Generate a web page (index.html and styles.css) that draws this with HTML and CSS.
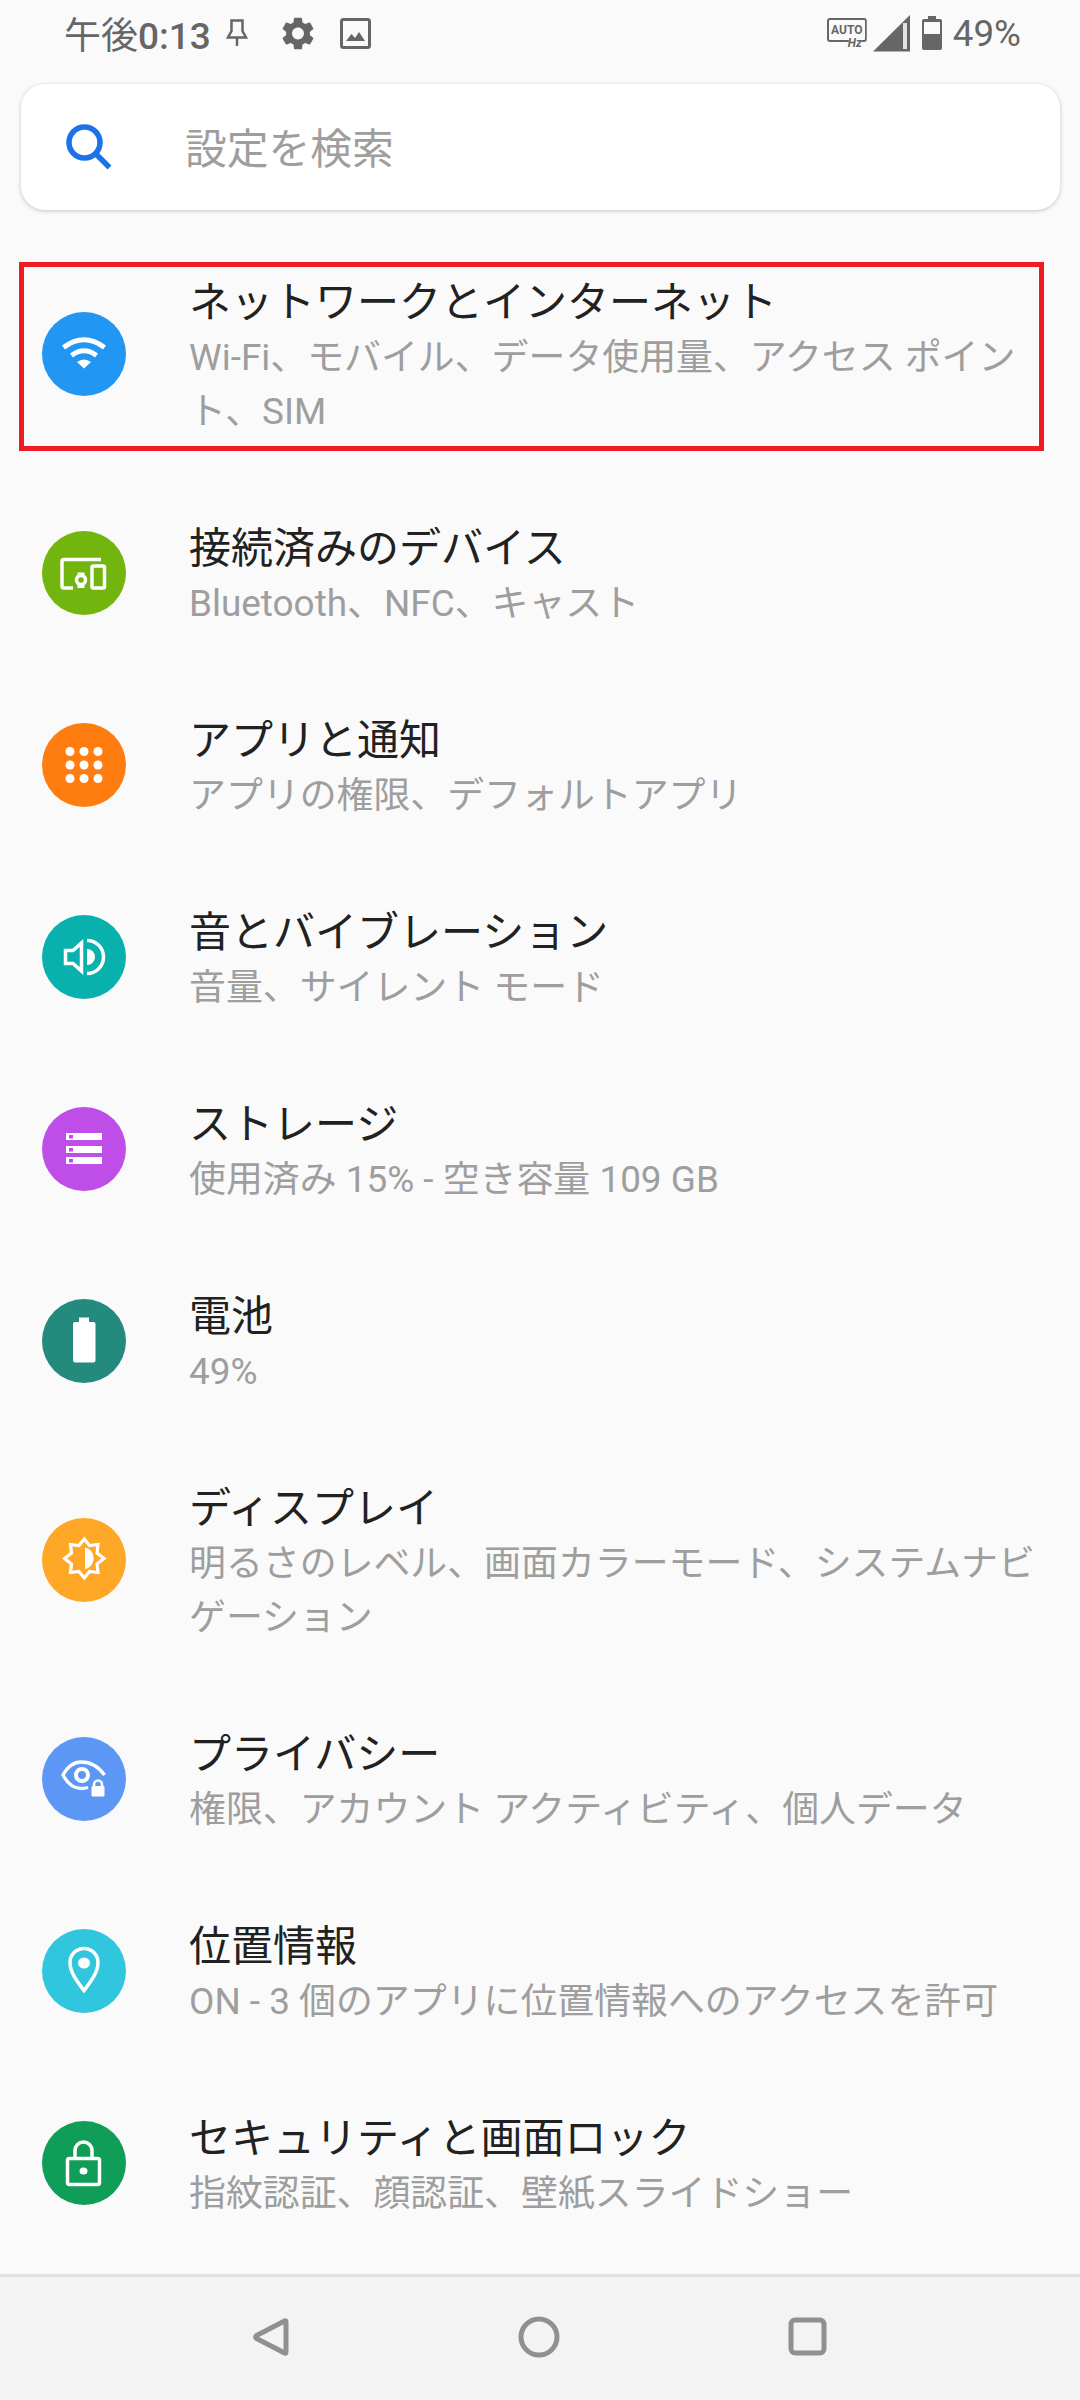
FILE: index.html
```html
<!DOCTYPE html>
<html lang="ja">
  <head>
    <meta charset="UTF-8" />
    <meta name="viewport" content="width=device-width, initial-scale=1.0" />
    <title>設定</title>
    <link rel="stylesheet" href="styles.css">
  </head>

  <body>
    <div class="statusbar">
      <span class="time">午後<b>0:13</b></span>
      <svg class="st-pin" viewBox="0 0 22 28"><path d="M5.5 1.500H16.500V12L20 18.500H2L5.500 12Z M11 18.500V27"/></svg>
      <svg class="st-gear" viewBox="2.3 2 19.4 20"><path d="M19.14 12.94c.04-.3.06-.61.06-.94 0-.32-.02-.64-.07-.94l2.03-1.58c.18-.14.23-.41.12-.61l-1.92-3.32c-.12-.22-.37-.29-.59-.22l-2.39.96c-.5-.38-1.03-.7-1.62-.94l-.36-2.54c-.04-.24-.24-.41-.48-.41h-3.84c-.24 0-.43.17-.47.41l-.36 2.54c-.59.24-1.13.57-1.62.94l-2.39-.96c-.22-.08-.47 0-.59.22L2.74 8.87c-.12.21-.08.47.12.61l2.03 1.58c-.05.3-.09.63-.09.94s.02.64.07.94l-2.03 1.58c-.18.14-.23.41-.12.61l1.92 3.32c.12.22.37.29.59.22l2.39-.96c.5.38 1.03.7 1.62.94l.36 2.54c.05.24.24.41.48.41h3.84c.24 0 .44-.17.47-.41l.36-2.54c.59-.24 1.13-.56 1.62-.94l2.39.96c.22.08.47 0 .59-.22l1.92-3.32c.12-.22.07-.47-.12-.61l-2.01-1.58zM12 15.6c-1.98 0-3.6-1.62-3.6-3.6s1.62-3.6 3.6-3.6 3.6 1.62 3.6 3.6-1.62 3.6-3.6 3.6z"/></svg>
      <svg class="st-image" viewBox="0 0 31 31">
        <rect x="1.500" y="1.500" width="28" height="28" rx="2" fill="none" stroke="#666" stroke-width="3"/>
        <path d="M6 23L11.500 16L15 20L19 14L25 23Z" fill="#666"/>
      </svg>

      <div class="st-right">
        <div class="st-auto">
          <span class="auto-txt">AUTO</span>
          <span class="hz-txt">Hz</span>
        </div>
        <svg class="st-signal" viewBox="0 0 37 37">
          <path d="M0 36.500L37 0V36.500Z" fill="#666"/>
          <rect x="30" y="8" width="4" height="26" fill="#e4e4e4"/>
        </svg>
        <svg class="st-batt" viewBox="0 0 20 34">
          <path d="M6 0H14V3H18Q20 3 20 5V32Q20 34 18 34H2Q0 34 0 32V5Q0 3 2 3H6Z" fill="#666"/>
          <rect x="2" y="6" width="16" height="12" fill="#fafafa"/>
        </svg>
        <span class="batt-pct">49%</span>
      </div>
    </div>

    <div class="searchbox">
      <svg class="search-ico" viewBox="0 0 46 46">
        <circle cx="18.500" cy="18.500" r="15.500"/>
        <path d="M29 29L43.500 43.500"/>
      </svg>
      <span class="search-txt">設定を検索</span>
    </div>

    <ul class="list">
      <li class="row marked">
        <span class="ic c-wifi">
          <svg viewBox="0 0 84 84">
            <path class="ln" d="M21.500 35.500Q42 20 62.500 35.500" stroke-width="5"/>
            <path class="ln" d="M29.500 43.500Q42 34 54.500 43.500" stroke-width="5"/>
            <path class="fl" d="M35 50Q42 45 49 50L42 56.500Z"/>
          </svg>
        </span>
        <div class="txt">
          <div class="title">ネットワークとインターネット</div>
          <div class="sub">Wi-Fi、モバイル、データ使用量、アクセス ポイント、SIM</div>
        </div>
      </li>

      <li class="row">
        <span class="ic c-dev">
          <svg viewBox="0 0 84 84">
            <path class="ln" d="M59 28.500H22Q20 28.500 20 30.500V55Q20 57 22 57H31" stroke-width="3.500"/>
            <rect class="ln" x="50" y="35" width="12.500" height="22" rx="1.500" stroke-width="3.500"/>
            <circle class="ln" cx="39" cy="49" r="4.500" stroke-width="3.500"/>
            <rect class="fl" x="35.500" y="41.500" width="7" height="3"/>
            <rect class="fl" x="35.500" y="53.500" width="7" height="3.500"/>
          </svg>
        </span>
        <div class="txt">
          <div class="title">接続済みのデバイス</div>
          <div class="sub">Bluetooth、NFC、キャスト</div>
        </div>
      </li>

      <li class="row">
        <span class="ic c-apps">
          <svg viewBox="0 0 84 84">
            <circle class="fl" cx="28" cy="28.500" r="4.500"/><circle class="fl" cx="42" cy="28.500" r="4.500"/><circle class="fl" cx="56" cy="28.500" r="4.500"/>
            <circle class="fl" cx="28" cy="42" r="4.500"/><circle class="fl" cx="42" cy="42" r="4.500"/><circle class="fl" cx="56" cy="42" r="4.500"/>
            <circle class="fl" cx="28" cy="55.500" r="4.500"/><circle class="fl" cx="42" cy="55.500" r="4.500"/><circle class="fl" cx="56" cy="55.500" r="4.500"/>
          </svg>
        </span>
        <div class="txt">
          <div class="title">アプリと通知</div>
          <div class="sub">アプリの権限、デフォルトアプリ</div>
        </div>
      </li>

      <li class="row">
        <span class="ic c-sound">
          <svg viewBox="0 0 84 84">
            <path class="ln" d="M23.500 35.500H31L39.500 28V56L31 48.500H23.500Z" stroke-width="3.500"/>
            <path class="fl" d="M45 34a8 8 0 0 1 0 16Z"/>
            <path class="ln" d="M45 25.500a16.500 16.500 0 0 1 0 33" stroke-width="3.500"/>
          </svg>
        </span>
        <div class="txt">
          <div class="title">音とバイブレーション</div>
          <div class="sub">音量、サイレント モード</div>
        </div>
      </li>

      <li class="row">
        <span class="ic c-storage">
          <svg viewBox="0 0 84 84">
            <rect class="fl" x="24" y="26" width="36" height="7"/>
            <rect class="fl" x="24" y="39" width="36" height="7"/>
            <rect class="fl" x="24" y="50" width="36" height="7"/>
            <rect x="27" y="28" width="4" height="3.500" fill="#bf4ee8"/>
            <rect x="27" y="41" width="4" height="3.500" fill="#bf4ee8"/>
            <rect x="27" y="52" width="4" height="3.500" fill="#bf4ee8"/>
          </svg>
        </span>
        <div class="txt">
          <div class="title">ストレージ</div>
          <div class="sub">使用済み 15% - 空き容量 109 GB</div>
        </div>
      </li>

      <li class="row">
        <span class="ic c-batt">
          <svg viewBox="0 0 84 84">
            <path class="fl" d="M37 18.500H47V23H51.500Q53.500 23 53.500 25V61.500Q53.500 63.500 51.500 63.500H33Q31 63.500 31 61.500V25Q31 23 33 23H37Z"/>
          </svg>
        </span>
        <div class="txt">
          <div class="title">電池</div>
          <div class="sub">49%</div>
        </div>
      </li>

      <li class="row">
        <span class="ic c-display">
          <svg viewBox="0 0 84 84">
            <path class="ln" stroke-width="3.200" d="M42.300 21L47.500 27.500L56 26.500L55 35L62 40.500L55 46L56 54.500L47.500 53.500L42.300 60L37 53.500L28.500 54.500L29.500 46L22.500 40.500L29.500 35L28.500 26.500L37 27.500Z"/>
            <path class="fl" d="M43 29.500a11 11 0 0 1 0 21.500Z"/>
          </svg>
        </span>
        <div class="txt">
          <div class="title">ディスプレイ</div>
          <div class="sub">明るさのレベル、画面カラーモード、システムナビゲーション</div>
        </div>
      </li>

      <li class="row">
        <span class="ic c-privacy">
          <svg viewBox="0 0 84 84">
            <path class="ln" stroke-width="3.300" d="M46 50.500Q42 51.500 39.500 51.500Q28 51.500 21 38Q28 25 39.500 25Q53 25 62.500 38"/>
            <circle class="ln" cx="40" cy="38" r="6" stroke-width="4"/>
            <rect class="fl" x="49.500" y="49" width="13" height="10.500" rx="1.500"/>
            <path class="ln" d="M52 50V47.500a4 4 0 0 1 8 0V50" stroke-width="2.500"/>
          </svg>
        </span>
        <div class="txt">
          <div class="title">プライバシー</div>
          <div class="sub">権限、アカウント アクティビティ、個人データ</div>
        </div>
      </li>

      <li class="row">
        <span class="ic c-loc">
          <svg viewBox="0 0 84 84">
            <path class="ln" stroke-width="3.500" d="M42 61.500C36 53.500 28 44 28 33.500a14 14 0 0 1 28 0C56 44 48 53.500 42 61.500Z"/>
            <ellipse class="fl" cx="42" cy="34" rx="6" ry="5.500"/>
          </svg>
        </span>
        <div class="txt">
          <div class="title">位置情報</div>
          <div class="sub">ON - 3 個のアプリに位置情報へのアクセスを許可</div>
        </div>
      </li>

      <li class="row">
        <span class="ic c-lock">
          <svg viewBox="0 0 84 84">
            <rect class="ln" x="25.500" y="37.500" width="32" height="26" rx="2" stroke-width="3.500"/>
            <path class="ln" d="M33 37.500V29.500a8.500 8.500 0 0 1 17 0V37.500" stroke-width="3.500"/>
            <ellipse class="fl" cx="41.500" cy="50" rx="4" ry="3.500"/>
          </svg>
        </span>
        <div class="txt">
          <div class="title">セキュリティと画面ロック</div>
          <div class="sub">指紋認証、顔認証、壁紙スライドショー</div>
        </div>
      </li>
    </ul>

    <div class="navbar">
      <div class="nav-btn">
        <svg viewBox="0 0 60 60"><path d="M45 15V45Q45 47 43.500 46L15.500 31.500Q14 30 15.500 28.500L43.500 14Q45 13 45 15Z"/></svg>
      </div>
      <div class="nav-btn">
        <svg viewBox="0 0 60 60"><circle cx="29" cy="30" r="18"/></svg>
      </div>
      <div class="nav-btn">
        <svg viewBox="0 0 60 60"><rect x="12" y="13" width="33" height="33" rx="4"/></svg>
      </div>
    </div>
  </body>
</html>
```

FILE: styles.css
```css
body {
  margin: 0;
  padding: 0;
  background: #fafafa;
  font-family: Roboto, "Noto Sans CJK JP", sans-serif;
  width: 1080px;
  height: 2400px;
  overflow: hidden;
  display: flex;
  flex-direction: column;
}

ul {
  list-style: none;
  margin: 0;
  padding: 0;
}

/* status bar */
.statusbar {
  height: 66px;
  padding: 0 59px 0 64px;
  display: flex;
  align-items: center;
  color: #666;
  font-size: 37px;
}
.time b {
  font-weight: 500;
}
.st-pin {
  width: 22px;
  height: 28px;
  margin-left: 15px;
  fill: none;
  stroke: #666;
  stroke-width: 2.5;
}
.st-gear {
  width: 32px;
  height: 33px;
  margin-left: 34px;
  fill: #666;
}
.st-image {
  width: 31px;
  height: 31px;
  margin-left: 26px;
}
.st-right {
  margin-left: auto;
  display: flex;
  align-items: center;
}

/* frame is open at the lower right, Hz sits in the gap */
.st-auto {
  position: relative;
  width: 40px;
  height: 32px;
  box-sizing: border-box;
}
.st-auto::before {
  content: "";
  position: absolute;
  top: 1px;
  left: 0;
  width: 40px;
  height: 24px;
  box-sizing: border-box;
  border: 2px solid #666;
  border-radius: 3px;
  clip-path: polygon(0 0, 100% 0, 100% 100%, 88% 100%, 88% 70%, 55% 70%, 55% 100%, 0 100%);
}
.auto-txt {
  position: absolute;
  top: 6px;
  left: 0;
  width: 40px;
  text-align: center;
  font-size: 12px;
  line-height: 14px;
  font-weight: 700;
  color: #666;
}
.hz-txt {
  position: absolute;
  top: 20px;
  left: 21px;
  font-size: 12px;
  line-height: 13px;
  font-weight: 700;
  font-style: italic;
  color: #666;
}
.st-signal {
  width: 37px;
  height: 37px;
  margin-left: 6px;
}
.st-batt {
  width: 20px;
  height: 34px;
  margin-left: 12px;
}
.batt-pct {
  margin-left: 11px;
  font-size: 36.75px;
}

/* search */
.searchbox {
  height: 126px;
  margin: 18px 20px 0 21px;
  background: #fff;
  border-radius: 24px;
  box-shadow: 0 1px 4px rgba(0, 0, 0, 0.22);
  display: flex;
  align-items: center;
}
.search-ico {
  width: 46px;
  height: 46px;
  margin-left: 45px;
  fill: none;
  stroke: #1a73e8;
  stroke-width: 5.5;
}
.search-txt {
  margin-left: 73px;
  margin-bottom: 3px;
  font-size: 41.75px;
  color: #9e9e9e;
}

/* rows */
.list {
  margin-top: 21px;
  flex: 1;
}
.row {
  position: relative;
  display: flex;
  align-items: center;
  padding: 38px 40px 38px 42px;
}
.row.marked::after {
  content: "";
  position: absolute;
  top: 31px;
  left: 19px;
  width: 1025px;
  height: 189px;
  box-sizing: border-box;
  border: 5px solid #ed1c24;
}
.ic {
  flex: none;
  width: 84px;
  height: 84px;
  border-radius: 50%;
}
.ic svg {
  display: block;
  width: 84px;
  height: 84px;
}
.ln {
  fill: none;
  stroke: #fff;
}
.fl {
  fill: #fff;
}
.c-wifi { background: #2196f3; }
.c-dev { background: #72b50e; }
.c-apps { background: #ff7d10; }
.c-sound { background: #08b0ae; }
.c-storage { background: #bf4ee8; }
.c-batt { background: #248a7e; }
.c-display { background: #ffa726; }
.c-privacy { background: #5c97f6; }
.c-loc { background: #2fc6de; }
.c-lock { background: #0f9d58; }

.txt {
  margin-left: 63px;
  padding-top: 6px;
  min-width: 0;
}
.title {
  font-size: 42px;
  line-height: 56px;
  color: #212121;
}
.sub {
  font-size: 36.9px;
  line-height: 54px;
  color: #9e9e9e;
}

/* nav */
.navbar {
  margin-top: 15px;
  height: 123px;
  border-top: 3px solid #e2e2e2;
  background: #f3f3f3;
  display: flex;
  justify-content: center;
  align-items: center;
}
.nav-btn {
  width: 269px;
  height: 60px;
  margin-bottom: 3px;
  display: flex;
  justify-content: center;
}
.nav-btn svg {
  width: 60px;
  height: 60px;
  fill: none;
  stroke: #909090;
  stroke-width: 5;
}
```
